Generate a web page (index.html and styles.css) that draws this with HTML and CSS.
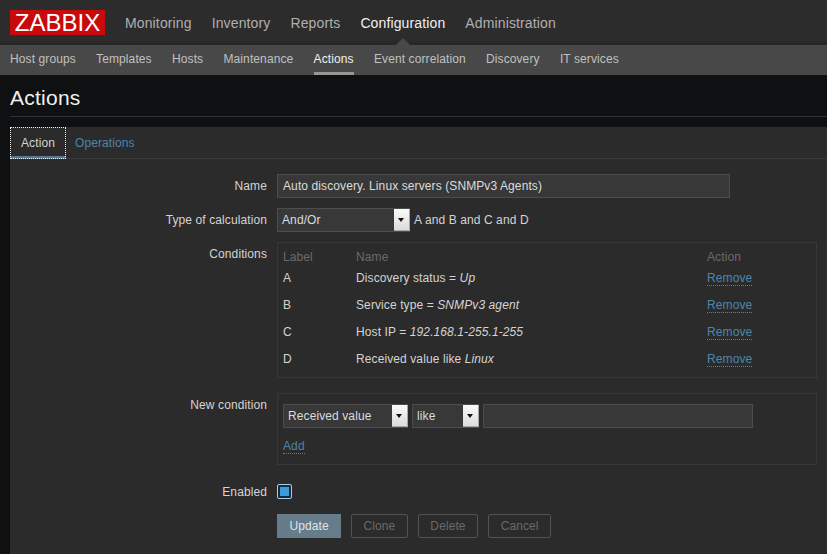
FILE: index.html
```html
<!DOCTYPE html>
<html lang="en">
<head>
<meta charset="utf-8">
<title>Actions</title>
<link rel="stylesheet" href="styles.css">
</head>
<body>
<header class="topbar">
  <div class="logo">ZABBIX</div>
  <nav class="mainnav">
    <a>Monitoring</a><a>Inventory</a><a>Reports</a><a class="current">Configuration<i class="notch"></i></a><a>Administration</a>
  </nav>
</header>
<nav class="subnav">
  <a>Host groups</a><a>Templates</a><a>Hosts</a><a>Maintenance</a><a class="current">Actions</a><a>Event correlation</a><a>Discovery</a><a>IT services</a>
</nav>
<main class="page">
  <h1 class="title">Actions</h1>
  <section class="panel">
    <div class="tabs">
      <a class="tab active">Action</a><a class="tab">Operations</a>
    </div>
    <form class="form">
      <div class="label">Name</div>
      <div class="field"><div class="input name-input">Auto discovery. Linux servers (SNMPv3 Agents)</div></div>

      <div class="label">Type of calculation</div>
      <div class="field calc">
        <div class="select calc-select"><span>And/Or</span><b class="arrow"></b></div>
        <span>A and B and C and D</span>
      </div>

      <div class="label">Conditions</div>
      <div class="field">
        <div class="box cond-box">
          <div class="cond-row head"><span>Label</span><span>Name</span><span>Action</span></div>
          <div class="cond-row"><span>A</span><span>Discovery status = <em>Up</em></span><a class="link">Remove</a></div>
          <div class="cond-row"><span>B</span><span>Service type = <em>SNMPv3 agent</em></span><a class="link">Remove</a></div>
          <div class="cond-row"><span>C</span><span>Host IP = <em>192.168.1-255.1-255</em></span><a class="link">Remove</a></div>
          <div class="cond-row"><span>D</span><span>Received value like <em>Linux</em></span><a class="link">Remove</a></div>
        </div>
      </div>

      <div class="label">New condition</div>
      <div class="field">
        <div class="box new-box">
          <div class="new-controls">
            <div class="select type-select"><span>Received value</span><b class="arrow"></b></div>
            <div class="select like-select"><span>like</span><b class="arrow"></b></div>
            <div class="input value-input"></div>
          </div>
          <a class="link add">Add</a>
        </div>
      </div>

      <div class="label enabled-label">Enabled</div>
      <div class="field"><span class="check"><i></i></span></div>

      <div class="field buttons">
        <button type="button" class="btn primary">Update</button>
        <button type="button" class="btn">Clone</button>
        <button type="button" class="btn">Delete</button>
        <button type="button" class="btn">Cancel</button>
      </div>
    </form>
  </section>
</main>
</body>
</html>
```

FILE: styles.css
```css
* { box-sizing: border-box; }
html, body { margin: 0; height: 100%; overflow: hidden; }
body {
  background: #0e1012;
  color: #d4d4d4;
  font: 12px/14px "Liberation Sans", Arial, sans-serif;
  letter-spacing: 0.1px;
}
a { cursor: pointer; }

.topbar {
  height: 45px;
  display: flex;
  align-items: center;
  padding-left: 10px;
  background: linear-gradient(#2c2c2c 88%, #262626);
}
.logo {
  width: 95px;
  height: 25px;
  background: #c80a0a;
  color: #fff;
  font-size: 24px;
  line-height: 26px;
  text-align: center;
  letter-spacing: 0;
}
.mainnav {
  display: flex;
  gap: 20px;
  margin: 1px 0 0 20px;
  font-size: 14px;
  line-height: 16px;
  letter-spacing: 0.13px;
  color: #b0b0b0;
}
.mainnav a { position: relative; }
.mainnav .current { color: #f0f0f0; }
.notch {
  position: absolute;
  left: 50%;
  bottom: -15px;
  margin-left: -8px;
  border: 8px solid transparent;
  border-top: 0;
  border-bottom-color: #484848;
}

.subnav {
  height: 30px;
  display: flex;
  gap: 20.3px;
  padding-left: 10px;
  background: #484848;
  color: #c0c0c0;
}
.subnav a { height: 30px; line-height: 29px; }
.subnav .current { color: #f0f0f0; border-bottom: 3px solid #969696; }

.page { padding-left: 10px; }
.title {
  margin: 0;
  height: 42px;
  padding-top: 11px;
  font-size: 21px;
  line-height: 24px;
  font-weight: 400;
  letter-spacing: 0.25px;
  color: #f0f0f0;
  border-bottom: 1px solid #2f3133;
}
.panel { margin-top: 10px; background: #2b2b2b; height: 427px; }

.tabs { display: flex; height: 32px; border-bottom: 1px solid #3a3a3a; }
.tab { height: 32px; padding: 9px 10px 0 9px; color: #4b86ab; }
.tab.active {
  width: 56px;
  padding-left: 11px;
  color: #d4d4d4;
  border-bottom: 3px solid #5d7586;
  outline: 1px dotted #f0f0f0;
  outline-offset: -1px;
}

.form {
  display: grid;
  grid-template-columns: 257px 1fr;
  grid-template-rows: 34px 34px 151px 91px 30px 24px;
  column-gap: 10px;
  padding-top: 15px;
}
.label { grid-column: 1; text-align: right; line-height: 24px; }
.enabled-label { line-height: 16px; }
.field { grid-column: 2; }

.input, .select {
  height: 24px;
  background: #383838;
  border: 1px solid #4d4d4d;
  color: #dcdcdc;
  line-height: 22px;
}
.input { padding-left: 5px; }
.name-input { width: 453px; }
.calc { display: flex; gap: 4px; align-items: center; height: 24px; }
.select { position: relative; padding-left: 4px; }
.calc-select { width: 133px; }
.type-select { width: 125px; }
.like-select { width: 67px; }
.value-input { width: 270px; }
.arrow {
  position: absolute;
  right: -1px;
  top: 0;
  width: 16px;
  height: 22px;
  background: linear-gradient(#fafafa, #dcdcdc);
  border-right: 1px solid #a8a8a8;
  border-bottom: 1px solid #a8a8a8;
}
.arrow::after {
  content: "";
  position: absolute;
  left: 4px;
  top: 9px;
  border: 3.5px solid transparent;
  border-top: 4px solid #111;
  border-bottom: 0;
}

.box { width: 540px; border: 1px solid #383838; padding-left: 5px; }
.cond-box { height: 136px; padding-top: 7px; }
.cond-row { display: grid; grid-template-columns: 73px 351px 1fr; height: 27px; }
.cond-row.head { height: 21px; color: #6a6a6a; }
.new-box { height: 72px; padding-top: 10px; }
.new-controls { display: flex; gap: 4px; }
.link { color: #4b86ab; border-bottom: 1px dotted #4b86ab; justify-self: start; height: 15px; }
.add { display: inline-block; margin-top: 11px; }

.check {
  display: block;
  width: 15px;
  height: 15px;
  border: 1px solid #9fd0ee;
  border-radius: 2px;
  background: #1e2a33;
  padding: 2px;
}
.check i { display: block; width: 9px; height: 9px; background: #3a9bdc; }

.buttons { display: flex; gap: 10px; }
.btn {
  height: 24px;
  padding: 0 11.5px;
  background: transparent;
  border: 1px solid #525252;
  border-radius: 2px;
  color: #6a6a6a;
  font: inherit;
  letter-spacing: inherit;
}
.btn.primary {
  width: 64px;
  background: #667c8a;
  border-color: #667c8a;
  color: #dfe5e9;
  border-radius: 0;
}
```
